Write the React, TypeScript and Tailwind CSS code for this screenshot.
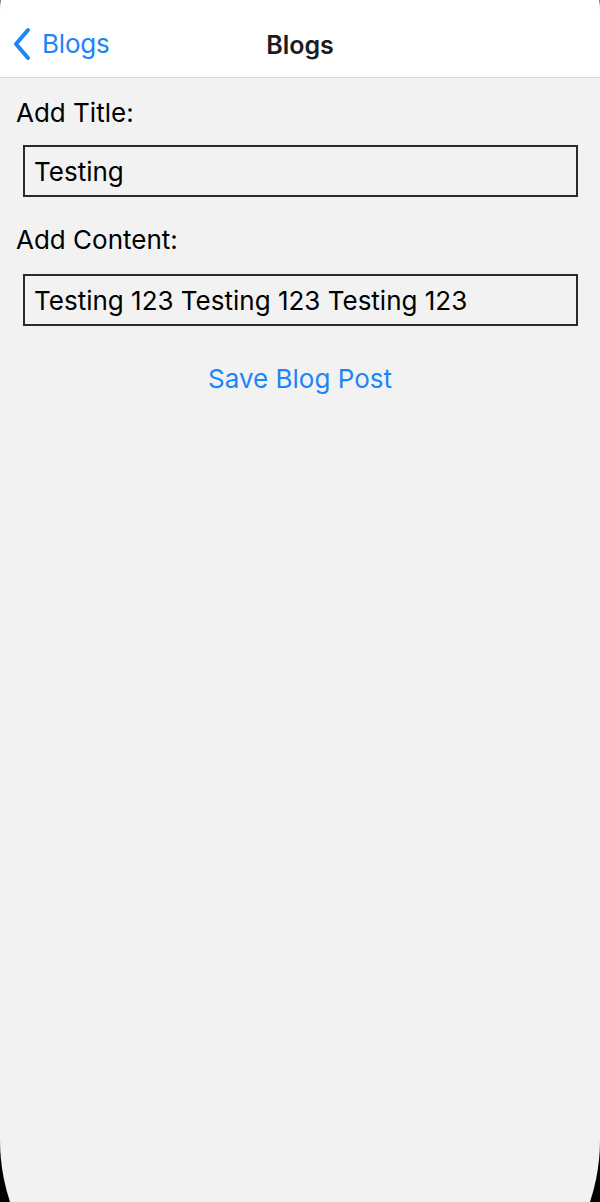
export default function App() {
  return (
    <div className="h-[1202px] w-[600px] overflow-hidden bg-black font-['Inter',sans-serif]">
      <div className="-mt-[135px] h-[1472px] pt-[135px] rounded-t-[150px] rounded-b-[197px] bg-[#f2f2f2] overflow-hidden">
        {/* Nav bar */}
        <div className="relative flex h-[78px] items-center border-b border-[#d9d9d9] bg-white">
          <button className="flex items-center gap-[10px] pl-[12px] pt-[10px] text-[#1e85f8]">
            <svg width="20" height="34" viewBox="0 0 20 34" fill="none">
              <path d="M16 3 L4 17 L16 31" stroke="currentColor" strokeWidth="4" strokeLinecap="round" strokeLinejoin="round" />
            </svg>
            <span className="text-[26px] leading-none tracking-[-0.2px]">Blogs</span>
          </button>
          <div className="absolute inset-x-0 top-[33px] text-center text-[25px] font-semibold leading-none text-[#1c1c1e]">
            Blogs
          </div>
        </div>

        {/* Form */}
        <div className="flex flex-col">
          <label className="ml-[16px] mt-[18px] text-[26px] leading-[34px] text-black">Add Title:</label>
          <div className="ml-[23px] mr-[22px] mt-[15px] flex h-[52px] items-center border-2 border-[#2b2b2b] px-[9px] text-[26px] text-black">
            Testing
          </div>
          <label className="ml-[16px] mt-[26px] text-[26px] leading-[34px] text-black">Add Content:</label>
          <div className="ml-[23px] mr-[22px] mt-[17px] flex h-[52px] items-center border-2 border-[#2b2b2b] px-[9px] text-[26px] text-black">
            Testing 123 Testing 123 Testing 123
          </div>
          <button className="mt-[35px] self-center text-[26px] leading-[36px] text-[#1e85f8]">Save Blog Post</button>
        </div>
      </div>
    </div>
  );
}
